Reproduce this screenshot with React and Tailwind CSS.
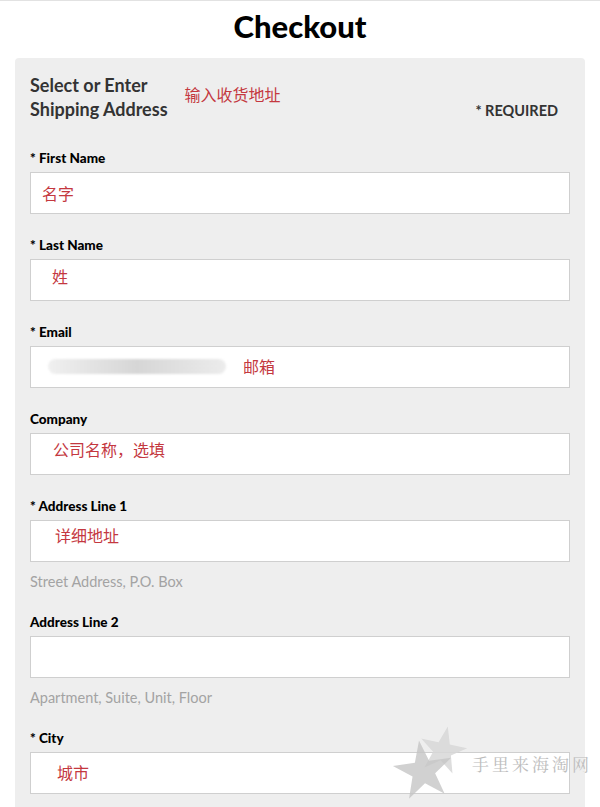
import React from "react";

const red = "text-[#c4383f]";
const cjk = { fontFamily: '"Noto Sans CJK SC", sans-serif' };

function Field({ label, hint, pad = "", children }) {
  return (
    <div className="flex flex-col">
      <div className="text-[13.5px] font-black text-black leading-[14px] mb-[7px]">{label}</div>
      <div className={`flex items-start gap-[17px] h-[42px] bg-white border border-[#cfcfcf] ${pad}`}>
        {children}
      </div>
      {hint && (
        <div className="text-[14.5px] text-[#a3a3a3] mt-[12px] mb-[1px] leading-[16px]">{hint}</div>
      )}
    </div>
  );
}

function Note({ children }) {
  return (
    <span className={`text-[16px] leading-[20px] ${red}`} style={cjk}>
      {children}
    </span>
  );
}

function Star({ className }) {
  return (
    <svg viewBox="0 0 100 100" className={className}>
      <polygon
        points="50,2 62,38 99,38 69,60 80,96 50,74 20,96 31,60 1,38 38,38"
        fill="currentColor"
      />
    </svg>
  );
}

export default function App() {
  return (
    <div
      className="relative w-[600px] h-[807px] overflow-hidden bg-white border-t border-[#e2e2e2]"
      style={{ fontFamily: 'Lato, "Noto Sans", sans-serif' }}
    >
      <h1 className="text-center text-[31px] font-black text-black leading-[36px] pt-[7px] pb-[14px]">
        Checkout
      </h1>

      <div className="mx-[15px] bg-[#eeeeee] rounded-[4px] px-[15px] pt-[15px] h-[800px] flex flex-col gap-[24px]">
        {/* header */}
        <div className="flex items-start pr-[12px] mb-[6px]">
          <div className="text-[18px] font-bold text-[#333] leading-[24px]">
            Select or Enter
            <br />
            Shipping Address
          </div>
          <span className={`ml-[17px] mt-[11px] text-[16px] leading-[20px] ${red}`} style={cjk}>
            输入收货地址
          </span>
          <div className="ml-auto mt-[29px] text-[14.5px] font-bold text-[#333] leading-[18px]">
            * REQUIRED
          </div>
        </div>

        <Field label="* First Name" pad="pl-[11px] pt-[10px]">
          <Note>名字</Note>
        </Field>
        <Field label="* Last Name" pad="pl-[21px] pt-[6px]">
          <Note>姓</Note>
        </Field>
        <Field label="* Email" pad="pl-[17px] pt-[9px]">
          <div className="mt-[3px] h-[15px] w-[178px] rounded-full bg-gradient-to-r from-[#f0f0f0] via-[#d6d6d6] to-[#ececec] blur-[1px]" />
          <Note>邮箱</Note>
        </Field>
        <Field label="Company" pad="pl-[22px] pt-[5px]">
          <Note>公司名称，选填</Note>
        </Field>
        <Field label="* Address Line 1" hint="Street Address, P.O. Box" pad="pl-[24px] pt-[4px]">
          <Note>详细地址</Note>
        </Field>
        <Field label="Address Line 2" hint="Apartment, Suite, Unit, Floor" />
        <Field label="* City" pad="pl-[26px] pt-[9px]">
          <Note>城市</Note>
        </Field>
      </div>

      {/* watermark */}
      <div className="absolute left-[393px] top-[724px] w-[80px] h-[75px] pointer-events-none">
        <Star className="absolute left-[26px] top-0 w-[48px] h-[48px] rotate-[12deg] text-[#d8d8d8] opacity-85" />
        <Star className="absolute left-0 top-[14px] w-[60px] h-[60px] -rotate-[8deg] text-[#c6c6c6] opacity-80" />
      </div>
      <div
        className="absolute left-[472px] top-[750px] text-[17px] tracking-[3px] text-[#bdbdbd] pointer-events-none"
        style={{ fontFamily: '"Noto Serif CJK SC", "Noto Sans CJK SC", serif' }}
      >
        手里来海淘网
      </div>
    </div>
  );
}
